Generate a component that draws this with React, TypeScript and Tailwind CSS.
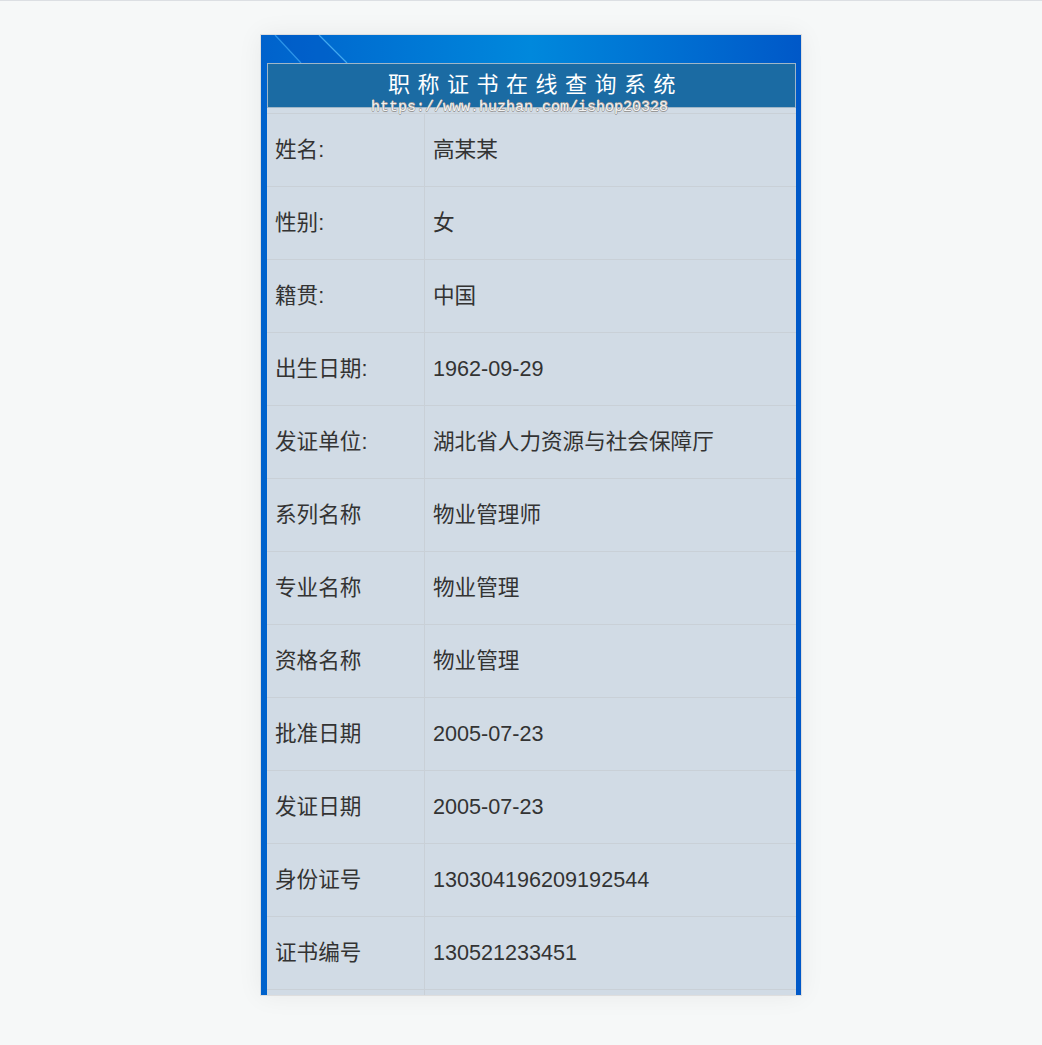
import React from "react";

const rows: [string, string][] = [
  ["姓名:", "高某某"],
  ["性别:", "女"],
  ["籍贯:", "中国"],
  ["出生日期:", "1962-09-29"],
  ["发证单位:", "湖北省人力资源与社会保障厅"],
  ["系列名称", "物业管理师"],
  ["专业名称", "物业管理"],
  ["资格名称", "物业管理"],
  ["批准日期", "2005-07-23"],
  ["发证日期", "2005-07-23"],
  ["身份证号", "130304196209192544"],
  ["证书编号", "130521233451"],
  ["", ""],
];

export default function App() {
  return (
    <div
      className="w-[1042px] h-[1045px] bg-[#f6f8f8] border-t border-[#dcdfe3] overflow-hidden"
      style={{ fontFamily: '"Liberation Sans", "Noto Sans CJK SC", sans-serif' }}
    >
      <div className="ml-[260px] mt-[33px] w-[542px] h-[962px] border border-[#dedede] shadow-[0_0_24px_rgba(0,0,0,0.06)] overflow-hidden bg-white">
        <div className="relative h-full bg-gradient-to-r from-[#0062cc] via-[#0088dc] to-[#0058c8] pl-[6px] pr-[5px] pt-[28px]">
          <svg className="pointer-events-none absolute left-0 top-0" width="120" height="30" viewBox="0 0 120 30">
            <path d="M16 0 L58 0 L86 28 L40 28 Z" fill="#0050c0" opacity="0.35" />
            <path d="M14 0 L40 28" stroke="#3aa0f0" strokeWidth="1.2" opacity="0.8" fill="none" />
            <path d="M58 0 L86 28" stroke="#4ab0f4" strokeWidth="1.2" opacity="0.9" fill="none" />
          </svg>
          <div className="relative z-10 h-[45px] border border-[#9fb6c8] bg-[#1b6ba3] flex items-center justify-center">
            <span className="text-white text-[22px] tracking-[7.5px] pl-[8px] leading-none mt-[-2px]">
              职称证书在线查询系统
            </span>
          </div>
          <div className="bg-[#d1dbe5] pt-[5px] h-full">
            {rows.map(([k, v], i) => (
              <div key={i} className="flex h-[73px] border-t border-[#c9d0d7]">
                <div className="w-[158px] border-r border-[#c9d0d7] pl-[8px] flex items-center text-[21.6px] text-[#333]">
                  {k}
                </div>
                <div className="flex-1 pl-[8px] flex items-center text-[21.6px] text-[#333]">{v}</div>
              </div>
            ))}
          </div>
          <div
            className="absolute z-20 left-[110px] top-[65px] text-[15px] text-[#f2f2f2] leading-none whitespace-nowrap"
            style={{
              fontFamily: '"Liberation Mono", monospace',
              textShadow: "0.6px 0 0 #999, -0.6px 0 0 #999, 0 0.6px 0 #999, 0 -0.6px 0 #999",
            }}
          >
            https://www.huzhan.com/ishop20328
          </div>
        </div>
      </div>
    </div>
  );
}
